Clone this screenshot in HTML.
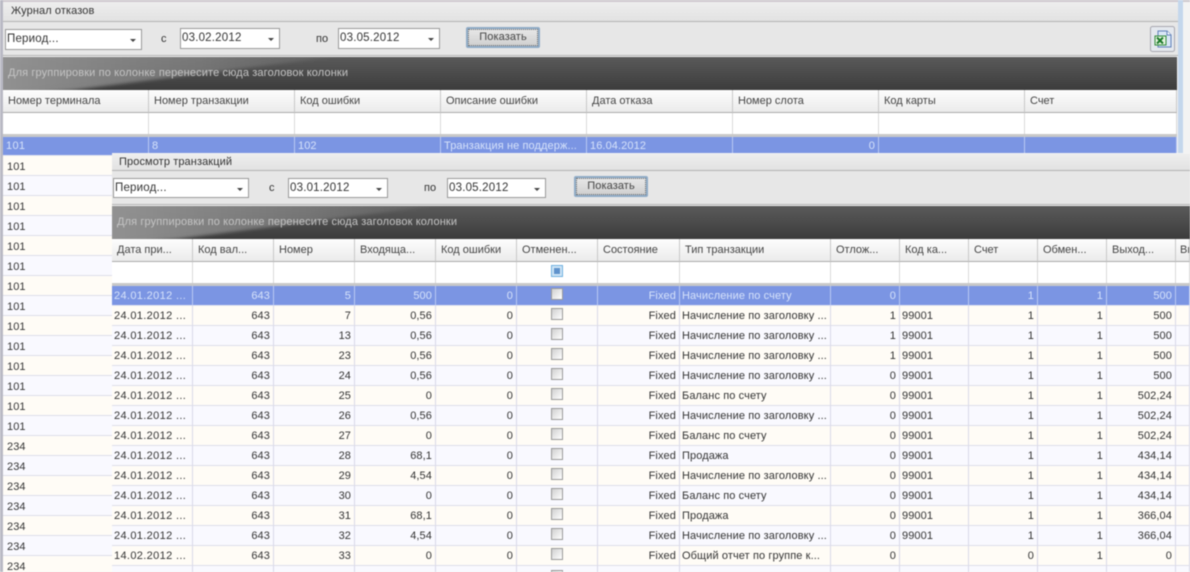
<!DOCTYPE html>
<html><head><meta charset="utf-8">
<style>
html,body{margin:0;padding:0;background:#f4f4f4}
#w{position:relative;width:1190px;height:572px;overflow:hidden;background:#f3f3f3;font:11px "Liberation Sans",sans-serif;color:#333;filter:blur(.45px)}
.a{position:absolute}
.t{position:absolute;white-space:nowrap;letter-spacing:.1px}
.title{background:linear-gradient(#eeeeee,#e2e2e2);border-bottom:1px solid #b4b4b4}
.bar{background:#e7e7e7;border-bottom:1px solid #b0b0b0}
.combo{position:absolute;background:#fff;border:1px solid #9a9a9a;box-sizing:border-box;font-size:11.5px;line-height:18px;padding-left:1px;letter-spacing:.2px;color:#333}
.combo:after{content:"";position:absolute;right:5px;top:9px;border:3px solid transparent;border-top:3px solid #444;border-bottom:0}
.btn{position:absolute;box-sizing:border-box;border:2px solid #8fabc6;border-radius:2px;background:linear-gradient(#e8e8e8,#cfcfcf);outline:1px dotted #666;outline-offset:-3px;text-align:center;font-size:11px;line-height:17px;letter-spacing:.1px;color:#444}
.dark{background:linear-gradient(#5a5a5a,#3c3c3c);color:#c4c4c4;overflow:hidden}
.dark svg{position:absolute;left:0;top:0}
.dark span{position:absolute;left:6px;top:10px;white-space:nowrap;letter-spacing:.13px;font-size:11px}
table{border-collapse:separate;border-spacing:0;table-layout:fixed;position:absolute}
td{padding:2px 3px 0;height:19px;box-sizing:border-box;border-right:1px solid #d9d9e8;border-bottom:1px solid #dedeea;text-align:right;white-space:nowrap;overflow:hidden;letter-spacing:.1px;line-height:17px}
td.l{text-align:left;padding-left:2px}
tr td:first-child{letter-spacing:.35px}
td.c{text-align:center;padding:0;line-height:19px}
tr.h td{height:23px;text-align:left;padding:0 0 0 5px;background:linear-gradient(#fdfdfd,#ebebeb);border-right:1px solid #c8c8c8;border-bottom:1px solid #aaa;color:#444;line-height:22px;letter-spacing:0}
tr.f td{height:21px;background:#fff;border-right:1px solid #dadada;border-bottom:0;padding:0}
tr.sep td{height:3px;background:#c8c8c8;padding:0;border:0;line-height:1px;font-size:1px}
tr.s td{background:#7b95e3;color:#d6e2fa;border-right:1px solid #b9c8f2;border-bottom:1px solid #e6e6f0}
tr.s0 td{padding-top:0;line-height:18px}
tr.s0 td.l{padding-left:3px}
tr.y td{background:#fffcf6}
tr.v td{background:#f9f9ff}
i.b{display:inline-block;width:10px;height:10px;border:1px solid #9a9a9a;background:linear-gradient(135deg,#d0d0d0,#fff);vertical-align:-2px}
i.q{display:inline-block;width:10px;height:10px;border:1px solid #6fb0e0;background:#cfe6f6;position:relative;vertical-align:-2px}
i.q:after{content:"";position:absolute;left:2px;top:2px;width:6px;height:6px;background:#5f92cc}
.lr{position:absolute;left:3px;width:109px;height:20px;box-sizing:border-box;border-bottom:1px solid #dedeea;padding-left:4px;line-height:23px;letter-spacing:.1px}
</style></head><body>
<div id="w">

<!-- back window -->
<div class="a" style="left:0;top:0;width:1190px;height:2px;background:#cfc9cf"></div>
<div class="a" style="left:0;top:0;width:3px;height:572px;background:#b9b9c4"></div>
<div class="a" style="left:1178px;top:0;width:5px;height:156px;background:#c4d7ec"></div>
<div class="a title" style="left:3px;top:2px;width:1175px;height:19px"></div>
<div class="t" style="left:11px;top:5px;font-size:11px">Журнал отказов</div>
<div class="a bar" style="left:3px;top:22px;width:1175px;height:33px"></div>
<div class="combo" style="left:5px;top:29px;width:137px;height:21px">Период...</div>
<div class="t" style="left:161px;top:33px">с</div>
<div class="combo" style="left:180px;top:28px;width:100px;height:21px">03.02.2012</div>
<div class="t" style="left:316px;top:33px">по</div>
<div class="combo" style="left:338px;top:28px;width:102px;height:21px">03.05.2012</div>
<div class="btn" style="left:466px;top:27px;width:74px;height:21px">Показать</div>
<svg class="a" style="left:1150px;top:26px" width="25" height="26" viewBox="0 0 25 26">
<rect x=".5" y=".5" width="24" height="25" rx="2" fill="#e4e8ee" stroke="#a8a8b0"/>
<path d="M8 5h9l4 4v12H8z" fill="#d9e6f6" stroke="#5f7fb8"/>
<path d="M17 5v4h4" fill="#fff" stroke="#5f7fb8"/>
<rect x="5" y="10" width="11" height="9" fill="#e6f4e0" stroke="#2f8a3a"/>
<path d="M7 11.5l6 6M13 11.5l-6 6" stroke="#1d7a2b" stroke-width="2"/>
</svg>
<div class="a dark" style="left:3px;top:57px;width:1174px;height:33px">
<svg width="420" height="33"><defs><linearGradient id="g1" x1="0" y1="0" x2="1" y2="0"><stop offset="0" stop-color="#969696" stop-opacity=".95"/><stop offset=".55" stop-color="#8c8c8c" stop-opacity=".6"/><stop offset="1" stop-color="#8c8c8c" stop-opacity="0"/></linearGradient><filter id="bl"><feGaussianBlur stdDeviation="1.5"/></filter></defs><polygon points="-5,-5 370,-5 70,33 -5,38" fill="url(#g1)" filter="url(#bl)"/></svg>
<span style="left:5px">Для группировки по колонке перенесите сюда заголовок колонки</span></div>

<table style="left:3px;top:90px;width:1174px">
<colgroup><col style="width:146px"><col style="width:146px"><col style="width:146px"><col style="width:146px"><col style="width:146px"><col style="width:146px"><col style="width:146px"><col style="width:152px"></colgroup>
<tr class="h"><td>Номер терминала</td><td>Номер транзакции</td><td>Код ошибки</td><td>Описание ошибки</td><td>Дата отказа</td><td>Номер слота</td><td>Код карты</td><td>Счет</td></tr>
<tr class="f"><td></td><td></td><td></td><td></td><td></td><td></td><td></td><td></td></tr>
<tr class="sep"><td></td><td></td><td></td><td></td><td></td><td></td><td></td><td></td></tr>
<tr class="s s0"><td class="l">101</td><td class="l">8</td><td class="l">102</td><td class="l">Транзакция не поддерж...</td><td class="l">16.04.2012</td><td>0</td><td></td><td></td></tr>
</table>

<div class="lr" style="top:156px;background:#fffcf6">101</div>
<div class="lr" style="top:176px;background:#f9f9ff">101</div>
<div class="lr" style="top:196px;background:#fffcf6">101</div>
<div class="lr" style="top:216px;background:#f9f9ff">101</div>
<div class="lr" style="top:236px;background:#fffcf6">101</div>
<div class="lr" style="top:256px;background:#f9f9ff">101</div>
<div class="lr" style="top:276px;background:#fffcf6">101</div>
<div class="lr" style="top:296px;background:#f9f9ff">101</div>
<div class="lr" style="top:316px;background:#fffcf6">101</div>
<div class="lr" style="top:336px;background:#f9f9ff">101</div>
<div class="lr" style="top:356px;background:#fffcf6">101</div>
<div class="lr" style="top:376px;background:#f9f9ff">101</div>
<div class="lr" style="top:396px;background:#fffcf6">101</div>
<div class="lr" style="top:416px;background:#f9f9ff">101</div>
<div class="lr" style="top:436px;background:#fffcf6">234</div>
<div class="lr" style="top:456px;background:#f9f9ff">234</div>
<div class="lr" style="top:476px;background:#fffcf6">234</div>
<div class="lr" style="top:496px;background:#f9f9ff">234</div>
<div class="lr" style="top:516px;background:#fffcf6">234</div>
<div class="lr" style="top:536px;background:#f9f9ff">234</div>
<div class="lr" style="top:556px;background:#fffcf6">234</div>

<!-- front window -->
<div class="a" style="left:112px;top:153px;width:1078px;height:419px;background:#f3f3f3"></div>
<div class="a title" style="left:112px;top:154px;width:1078px;height:16px"></div>
<div class="t" style="left:119px;top:156px">Просмотр транзакций</div>
<div class="a bar" style="left:112px;top:171px;width:1078px;height:33px"></div>
<div class="combo" style="left:113px;top:178px;width:136px;height:20px">Период...</div>
<div class="t" style="left:269px;top:182px">с</div>
<div class="combo" style="left:288px;top:178px;width:100px;height:20px">03.01.2012</div>
<div class="t" style="left:424px;top:182px">по</div>
<div class="combo" style="left:447px;top:178px;width:99px;height:20px">03.05.2012</div>
<div class="btn" style="left:574px;top:176px;width:74px;height:21px">Показать</div>
<div class="a dark" style="left:112px;top:206px;width:1078px;height:33px">
<svg width="420" height="33"><defs><linearGradient id="g2" x1="0" y1="0" x2="1" y2="0"><stop offset="0" stop-color="#969696" stop-opacity=".95"/><stop offset=".55" stop-color="#8c8c8c" stop-opacity=".6"/><stop offset="1" stop-color="#8c8c8c" stop-opacity="0"/></linearGradient><filter id="bl2"><feGaussianBlur stdDeviation="1.5"/></filter></defs><polygon points="-5,-5 360,-5 65,33 -5,38" fill="url(#g2)" filter="url(#bl2)"/></svg>
<span style="left:5px">Для группировки по колонке перенесите сюда заголовок колонки</span></div>

<table style="left:112px;top:239px;width:1078px">
<colgroup><col style="width:81px"><col style="width:81px"><col style="width:81px"><col style="width:81px"><col style="width:81px"><col style="width:81px"><col style="width:82px"><col style="width:151px"><col style="width:69px"><col style="width:69px"><col style="width:69px"><col style="width:69px"><col style="width:69px"><col style="width:14px"></colgroup>
<tr class="h"><td>Дата при...</td><td>Код вал...</td><td>Номер</td><td>Входяща...</td><td>Код ошибки</td><td>Отменен...</td><td>Состояние</td><td>Тип транзакции</td><td>Отлож...</td><td>Код ка...</td><td>Счет</td><td>Обмен...</td><td>Выход...</td><td style="padding-left:4px">Вь</td></tr>
<tr class="f"><td></td><td></td><td></td><td></td><td></td><td class="c"><i class="q"></i></td><td></td><td></td><td></td><td></td><td></td><td></td><td></td><td></td></tr>
<tr class="sep"><td></td><td></td><td></td><td></td><td></td><td></td><td></td><td></td><td></td><td></td><td></td><td></td><td></td><td></td></tr>
<tr class="s"><td class="l">24.01.2012 ...</td><td>643</td><td>5</td><td>500</td><td>0</td><td class="c"><i class="b"></i></td><td>Fixed</td><td class="l">Начисление по счету</td><td>0</td><td class="l"></td><td>1</td><td>1</td><td>500</td><td></td></tr>
<tr class="y"><td class="l">24.01.2012 ...</td><td>643</td><td>7</td><td>0,56</td><td>0</td><td class="c"><i class="b"></i></td><td>Fixed</td><td class="l">Начисление по заголовку ...</td><td>1</td><td class="l">99001</td><td>1</td><td>1</td><td>500</td><td></td></tr>
<tr class="v"><td class="l">24.01.2012 ...</td><td>643</td><td>13</td><td>0,56</td><td>0</td><td class="c"><i class="b"></i></td><td>Fixed</td><td class="l">Начисление по заголовку ...</td><td>1</td><td class="l">99001</td><td>1</td><td>1</td><td>500</td><td></td></tr>
<tr class="y"><td class="l">24.01.2012 ...</td><td>643</td><td>23</td><td>0,56</td><td>0</td><td class="c"><i class="b"></i></td><td>Fixed</td><td class="l">Начисление по заголовку ...</td><td>1</td><td class="l">99001</td><td>1</td><td>1</td><td>500</td><td></td></tr>
<tr class="v"><td class="l">24.01.2012 ...</td><td>643</td><td>24</td><td>0,56</td><td>0</td><td class="c"><i class="b"></i></td><td>Fixed</td><td class="l">Начисление по заголовку ...</td><td>0</td><td class="l">99001</td><td>1</td><td>1</td><td>500</td><td></td></tr>
<tr class="y"><td class="l">24.01.2012 ...</td><td>643</td><td>25</td><td>0</td><td>0</td><td class="c"><i class="b"></i></td><td>Fixed</td><td class="l">Баланс по счету</td><td>0</td><td class="l">99001</td><td>1</td><td>1</td><td>502,24</td><td></td></tr>
<tr class="v"><td class="l">24.01.2012 ...</td><td>643</td><td>26</td><td>0,56</td><td>0</td><td class="c"><i class="b"></i></td><td>Fixed</td><td class="l">Начисление по заголовку ...</td><td>0</td><td class="l">99001</td><td>1</td><td>1</td><td>502,24</td><td></td></tr>
<tr class="y"><td class="l">24.01.2012 ...</td><td>643</td><td>27</td><td>0</td><td>0</td><td class="c"><i class="b"></i></td><td>Fixed</td><td class="l">Баланс по счету</td><td>0</td><td class="l">99001</td><td>1</td><td>1</td><td>502,24</td><td></td></tr>
<tr class="v"><td class="l">24.01.2012 ...</td><td>643</td><td>28</td><td>68,1</td><td>0</td><td class="c"><i class="b"></i></td><td>Fixed</td><td class="l">Продажа</td><td>0</td><td class="l">99001</td><td>1</td><td>1</td><td>434,14</td><td></td></tr>
<tr class="y"><td class="l">24.01.2012 ...</td><td>643</td><td>29</td><td>4,54</td><td>0</td><td class="c"><i class="b"></i></td><td>Fixed</td><td class="l">Начисление по заголовку ...</td><td>0</td><td class="l">99001</td><td>1</td><td>1</td><td>434,14</td><td></td></tr>
<tr class="v"><td class="l">24.01.2012 ...</td><td>643</td><td>30</td><td>0</td><td>0</td><td class="c"><i class="b"></i></td><td>Fixed</td><td class="l">Баланс по счету</td><td>0</td><td class="l">99001</td><td>1</td><td>1</td><td>434,14</td><td></td></tr>
<tr class="y"><td class="l">24.01.2012 ...</td><td>643</td><td>31</td><td>68,1</td><td>0</td><td class="c"><i class="b"></i></td><td>Fixed</td><td class="l">Продажа</td><td>0</td><td class="l">99001</td><td>1</td><td>1</td><td>366,04</td><td></td></tr>
<tr class="v"><td class="l">24.01.2012 ...</td><td>643</td><td>32</td><td>4,54</td><td>0</td><td class="c"><i class="b"></i></td><td>Fixed</td><td class="l">Начисление по заголовку ...</td><td>0</td><td class="l">99001</td><td>1</td><td>1</td><td>366,04</td><td></td></tr>
<tr class="y"><td class="l">14.02.2012 ...</td><td>643</td><td>33</td><td>0</td><td>0</td><td class="c"><i class="b"></i></td><td>Fixed</td><td class="l">Общий отчет по группе к...</td><td>0</td><td class="l"></td><td>0</td><td>1</td><td>0</td><td></td></tr>
<tr class="v"><td class="l"></td><td></td><td></td><td></td><td></td><td class="c" style="vertical-align:top"><i class="b" style="margin-top:4px"></i></td><td></td><td class="l"></td><td></td><td class="l"></td><td></td><td></td><td></td><td></td></tr>
</table>
</div>
</body></html>
